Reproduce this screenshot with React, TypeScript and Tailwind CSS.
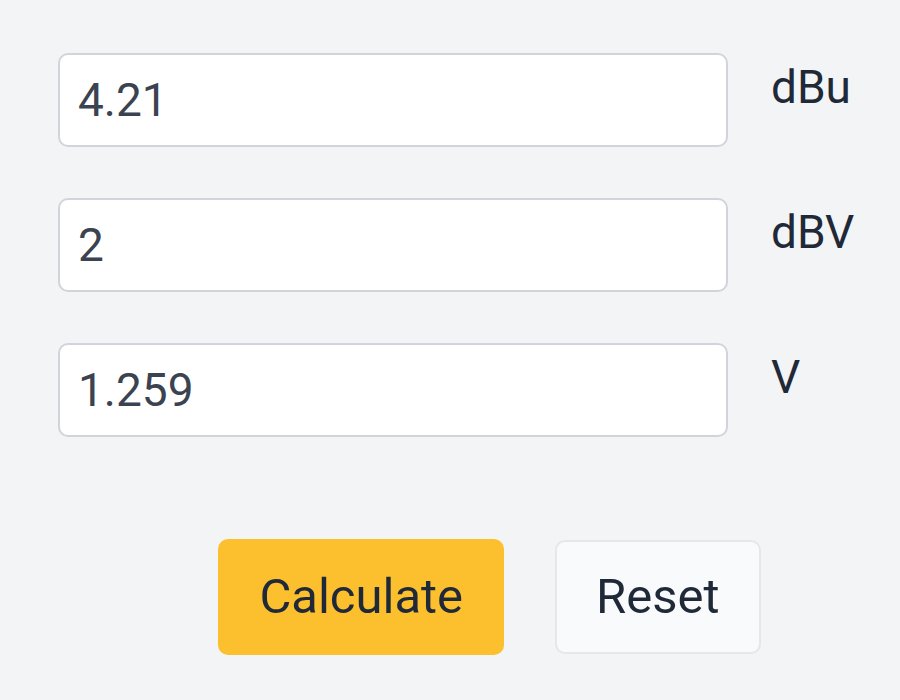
import { useState } from "react";

const fields = [
  { key: "dbu", unit: "dBu", value: "4.21" },
  { key: "dbv", unit: "dBV", value: "2" },
  { key: "v", unit: "V", value: "1.259" },
];

export default function App() {
  const [values, setValues] = useState<Record<string, string>>(
    Object.fromEntries(fields.map((f) => [f.key, f.value]))
  );

  return (
    <div
      className="min-h-screen w-full bg-[#f3f4f6] pl-[58px] pt-[53px]"
      style={{ fontFamily: "Roboto, 'Noto Sans', sans-serif" }}
    >
      <div className="flex flex-col gap-[51px]">
        {fields.map((f) => (
          <div key={f.key} className="flex items-start gap-[43px]">
            <input
              value={values[f.key]}
              onChange={(e) => setValues({ ...values, [f.key]: e.target.value })}
              className="h-[94px] w-[670px] rounded-[10px] border-2 border-[#d1d5db] bg-white px-[18px] text-[46px] text-[#3b4250] outline-none"
            />
            <span className="text-[46px] leading-normal text-[#1f2937]">{f.unit}</span>
          </div>
        ))}
      </div>

      <div className="mt-[102px] flex w-[863px] justify-center gap-[51px]">
        <button className="h-[116px] rounded-[10px] bg-[#fcc02e] px-[41px] text-[49px] text-[#1f2937]">
          Calculate
        </button>
        <button className="mt-px h-[114px] rounded-[10px] border-2 border-[#e5e7eb] bg-[#f9fafb] px-[39px] text-[49px] text-[#1f2937]">
          Reset
        </button>
      </div>
    </div>
  );
}
